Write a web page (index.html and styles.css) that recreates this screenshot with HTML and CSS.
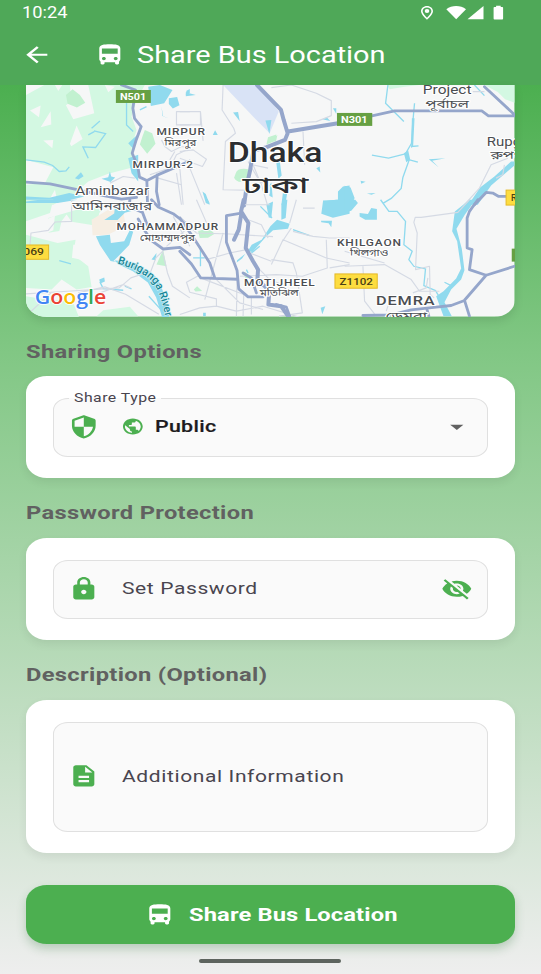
FILE: index.html
```html
<!DOCTYPE html>
<html lang="en">
<head>
<meta charset="utf-8">
<title>Share Bus Location</title>
<link rel="stylesheet" href="styles.css">
</head>
<body>
<svg width="0" height="0" class="defs" aria-hidden="true">
  <symbol id="bus" viewBox="0 0 24 24" preserveAspectRatio="none"><path d="M4 16c0 .88.39 1.67 1 2.22V20c0 .55.45 1 1 1h1c.55 0 1-.45 1-1v-1h8v1c0 .55.45 1 1 1h1c.55 0 1-.45 1-1v-1.78c.61-.55 1-1.34 1-2.22V6c0-3.5-3.58-4-8-4s-8 .5-8 4v10zm3.500 1c-.83 0-1.500-.67-1.500-1.500S6.670 14 7.500 14s1.500.67 1.500 1.500S8.330 17 7.500 17zm9 0c-.83 0-1.500-.67-1.500-1.500s.67-1.500 1.500-1.500 1.500.67 1.500 1.500-.67 1.500-1.500 1.500zm1.500-6H6V6h12v5z"/></symbol>
</svg>
<div class="screen">
  <header class="top">
    <div class="status">
      <span class="tx time">10:24</span>
      <svg class="status-icons" viewBox="0 0 86 16" width="86" height="16">
        <path fill-rule="evenodd" d="M7 1C3.600 1 1 3.400 1 6.300C1 9.800 7 14.700 7 14.700S13 9.800 13 6.300C13 3.400 10.400 1 7 1zM7 2.500c2.600 0 4.400 1.700 4.400 3.800c0 2-2.600 4.800-4.400 6.500c-1.800-1.700-4.400-4.500-4.400-6.500C2.600 4.200 4.400 2.500 7 2.500z"/>
        <ellipse cx="7" cy="6" rx="2.300" ry="1.900"/>
        <path d="M26.300 4.200C31.800 0 40.500 0 46 4.200L36.200 14.200z"/>
        <path d="M63.500 1V14.200H47.500z"/>
        <path d="M74.500 2h1.600V.8h4.600V2h1.600q.8 0 .8.800v10.700q0 .9-.8.900h-7.800q-.9 0-.9-.9V2.800q0-.8.900-.8z"/>
      </svg>
    </div>
    <div class="toolbar">
      <svg class="icon" viewBox="0 0 24 24" preserveAspectRatio="none"><path d="M20 11H7.830l5.590-5.590L12 4l-8 8 8 8 1.410-1.410L7.830 13H20v-2z"/></svg>
      <svg class="icon bar-bus"><use href="#bus"/></svg>
      <h1 class="tx title">Share Bus Location</h1>
    </div>
  </header>

  <main class="content">
    <svg class="map" viewBox="78 255 1467 696" preserveAspectRatio="none">
      <rect x="78" y="255" width="1467" height="696" fill="#f6f7f7"/>

      <!-- north-west -->
      <g transform="translate(60 240)">
        <path class="park" d="M18 15H375L350 60 335 110 350 150 335 200 340 262 265 282 205 305 160 345 100 375H18V315L75 310 100 262 18 240z"/>
        <path class="land" d="M18 15h55L18 45zM150 15h55l18 85-63 18-22-42 15-12zM30 92l32-15-5 35zM62 142l30-48 2 40zM70 182l30-2-3 25zM150 192l20-55 18 40-34 22zM105 15l22 0-12 18zM255 15l30 5-20 17zM200 335l30-25 20 20zM85 365l20-35 8 40z"/>
        <path class="green" d="M138 45l20-17 22 17 16 23-25 15-28-12zM375 150l22 10 10 32-25 30-22-28 8-25z"/>
        <path class="water" d="M385 20l35-5 38 15-25 40-40 8zM447 55l25-4 7 25-20 10-12-14zM425 80l5 30 18 6-20-8zM500 32l10-5v12l-12 5zM165 295l18-18 8 12-15 10zM245 297l20-5 5-17 4 15 12 3-14 14zM325 190l30-28-15 45zM325 235l30-10v80l-20-25zM18 350l70 4 60-14 45 10-55 14-40 6-45-4-35 10z"/>
        <path class="stream" d="M18 240l55 7 25 10 20 18 20-2 10-12M215 145l25-22M222 153l35 8-30 42-38-2 16 34M205 165l18-10M265 345l30-20M320 60v75l20 20M360 90l20-10"/>
        <path class="minor" d="M510 95h-40v40h40M425 180l10 20 20 15 30-15 25 5M450 240l15-25M390 285l60-20 20-40 40-20M415 295l70 20M270 310l40-20 35 5M470 280l15 95"/>
        <path class="road" d="M18 307l72 5 75 16 90 20 50 10 45-5M305 15l42 15-8 55 5 30 20 25-15 40-12 40 17 40 5 32 22 10 2 73M382 302l30-16 98-42M412 285l-2 50 8 40"/>
      </g>

      <!-- north -->
      <g transform="translate(540 240)">
        <path class="air" d="M130 15H235L275 65l22 30-27 65-45-45z"/>
        <path class="green" d="M265 172l25-8-5 20-25 10zM168 280q5-17 38-12l-5 36q-30 8-38-10zM268 185l25-20-4 20z"/>
        <path class="water" d="M257 122l18-2-6 42zM160 98l15-2 5 28zM99 165l7-14 8 14zM290 250l10-8 6 45-10 10zM312 322l15-10-10 63h-12zM270 315l5-7 4 45-10-5zM68 335l10 8 12 32-12-5zM430 375v-13l45-2 0-25 15-15 20-3v58zM427 118l15-5 10 10zM410 265l10-5 2 18zM18 37l30 8-30 4zM460 85l10 0v17z"/>
        <path class="minor" d="M130 15l-3 75 35 55 5 15-30 25-7 145 90 2M275 23l60-8 75 25 45 22v45l-45 18-75 5M370 155l5 100M0 95h62v40H0M62 95l8 88M0 215l40-5 40 28-12 22-68-25M30 265l45 110M0 265l10 110M205 245l35 60 35 15M265 265l-45-10 25 60 18 60"/>
        <path class="road wide" d="M232 15l72 75 8 30 12 40-8 20-55 22-40 10-10 60-10 45-8 60M325 155l150-25"/>
      </g>

      <!-- north-east -->
      <g transform="translate(1035 240)">
        <path class="park" d="M128 15H225l-45 5-45 8zM420 15h90v53l-28-10-22-22z"/>
        <path class="water" d="M500 245l10 0v12l-70 60-40 58h-28l35-52 43-33zM178 220l13-8 6 27-12 8zM0 318l18 5 12 32-8 20H0zM48 303l15 3-13 6zM67 341l26-1-12 5zM202 115h8l-4 82-6 8zM253 238l50-3-40 8 20 20z"/>
        <path class="stream" d="M130 15l-7 55 30 30 25 25M210 70l-5 55-4 65-16 28 8 25-18 50-5 33-30 30-25 15M82 226l50 9 50-13M195 240l25 7M200 200l22-2M390 15l30 32"/>
        <path class="minor" d="M385 35h35M490 235l-50 20-35 70-45 50M480 255l-5 30-20 10"/>
        <path class="road" d="M82 108l68-15h262l20 15h78M420 20l88 82M390 375l35-37 20 2 18 10h25"/>
      </g>

      <!-- south-west -->
      <g transform="translate(60 600)">
        <path class="park" d="M18 0H100l-10 40-72 25zM85 55L240 10l20 5-22 25-8 38-75-12-15-22-15 20-7 30-32 5zM18 105l95 25 54-10-7 45 45 35 10 62-45 8-45-30-30 30-77-5zM18 290l60 10 80 5 20 50H18zM250 332l80-10 25 28H230z"/>
        <path class="land" d="M75 62l30-15-5 45-25 10zM160 135l30 0-10 45-24-6z"/>
        <path d="M215 60l50-30 45 5 8 45-55 25-45 2z" fill="#f6eee3"/>
        <path class="green" d="M410 195l20-45 10 50z"/>
        <path class="water" d="M285 20l45-5 20 15-35 9-22 22-40 0 30-20zM228 110l42-5 3 25 40-5 17-34 10 5-12 40-32 33-15 15 15 5-24-5-20-30-12-18zM285 182l45 7 70 35 15 15 22 55 12 60h-22l-18-60-25-45-45-34-45-22zM395 180l15-20-2 22zM238 240l15-6 2 12-14 6zM18 5l40-5 115 0-60 10-95 0z"/>
        <path class="stream" d="M118 183l35 10M240 247l10 20 60 5M387 290l43 48M315 260l20 8"/>
        <path class="minor" d="M28 160l5-60 52-8 20-25 50-2V0M18 283l125-8 155-10 35-30 60-20 15-40 20-20 15 65 15 40 52 35M175 280l80-18 62 22 100 60M18 350l75-70M240 280l70-25 20 10M460 50l50 90M440 140l70-60"/>
        <path class="road" d="M395 0l20 22 45 20 50 38M330 0l-2 20 40 18 15 40M355 58l20 35 20 30 35 25 50-5 30 22"/>
      </g>

      <!-- south -->
      <g transform="translate(540 600)">
        <path class="green" d="M55 95l30-10 20 17-20 12-25 1zM42 270l10-10 15 14-20 2zM188 220l8-3 14 13-10 10z"/>
        <path class="water" d="M272 80l20-20 38 12-5 15-45 5-22 20-40 45-14-2 12-20 30-15zM305 60V15l5-15h13l-5 55zM260 15l20-10-5 50-8-2zM430 5l40-5 40 0v42l-50 12-35-12zM424 63h33l-2 20-8-12-22-3zM75 0l8-2 8 15zM423 325l14-5-9 24zM172 182l25-20-10 15-16 12zM70 340l8 0v10h-8z"/>
        <path class="stream" d="M242 20l35 35M240 140l-25 20M62 200V140M40 175h35M205 220l-5-10M340 90l50 18"/>
        <path class="minor" d="M0 50l50 50 100 3 130 8M50 0l35 80M340 95l60 15 50 5 60 0M350 0l-20 70M275 195l35-75 130 55 70 15M440 120l3 85-75 25-78-5-110 5M275 180l65 10 10 30 18 120-70 10M335 85l-30 45M0 345l60-20 50-5 0-22-80-20-10-30 40-22M110 320l60 15 80-15 115 35M130 100l-55 200M172 225l-2 125M62 235l130 50-2 65M205 60l40 15 20 40M195 15l75 0M240 210l30 30 50 20M210 160l65 25M80 180l70-20 50-10M370 25h35M215 295v50M110 240l70 70 70 20M510 195l-60 10"/>
        <path class="road wide" d="M192 0l-8 35 22 35-8 75 22 40 15 25-2 30 28 25 7 22-2 28 38 5 20 28M185 40l-8 50-14 30"/>
        <path class="road" d="M185 40l-45 8v80l32 85 5 55 28 24h45M190 220l25 15 15 45M290 315l30 8 10 27M0 155l35 38 28 42 110 4M0 55l45 65 45 70 15 45"/>
      </g>

      <!-- south-east -->
      <g transform="translate(1035 600)">
        <path class="water" d="M0 0h32l8 10-20 23-20 5zM45 40l25 3 10-18 17 3v32l-35 0-17-10zM375 0h18l-32 45-25 42 16 60 8 65-10 28-30 30-20 38 22 42h-25l-22-60 22-15 38-38 15-30-12-82-15-30 8-60z"/>
        <path class="stream" d="M108 0l25 35 25 0 25 30-5 70 25 20-10 25 15 20 35 8-5 50 35 15 15 25M300 248l20 10"/>
        <path class="minor" d="M375 0l-35 38-110 15-18 0-4 15 10 32-5 110 42-10 2 85 12 10M0 200l120-5 80 45 25 35 60 0M55 200l5 105 35 45M0 155l120 35M135 305l-10 30M250 235l-5 30-40 15"/>
        <path class="road" d="M400 0l-25 35-7 20v90l15 5-8 60 50 17 85-27M425 227l-65 75 15 48M55 348l85-2 60-15 75-8 45-5 40-15M248 332l5 18"/>
      </g>

      <!-- road shields -->
      <rect x="348" y="270" width="105" height="39" fill="#66a043"/>
      <rect x="1012" y="339" width="106" height="39" fill="#66a043"/>
      <rect x="1537" y="747" width="10" height="39" fill="#66a043"/>
      <g fill="#fddd40" stroke="#e5b926" stroke-width="3">
        <rect x="60" y="736" width="86" height="43"/>
        <rect x="1006" y="823" width="127" height="43"/>
        <rect x="1520" y="571" width="60" height="45"/>
      </g>
      <g class="shield">
        <text x="360" y="300" textLength="79" lengthAdjust="spacingAndGlyphs">N501</text>
        <text x="1024" y="369" textLength="80" lengthAdjust="spacingAndGlyphs">N301</text>
        <g class="dark">
          <text x="70" y="767" textLength="62" lengthAdjust="spacingAndGlyphs">069</text>
          <text x="1020" y="855" textLength="100" lengthAdjust="spacingAndGlyphs">Z1102</text>
          <text x="1535" y="605">R</text>
        </g>
      </g>

      <g class="label">
        <text x="470" y="405" textLength="148" lengthAdjust="spacingAndGlyphs" class="area">MIRPUR</text>
        <text x="494" y="438" textLength="96" lengthAdjust="spacingAndGlyphs" class="bn">মিরপুর</text>
        <text x="398" y="504" textLength="184" lengthAdjust="spacingAndGlyphs" class="area">MIRPUR-2</text>
        <text x="226" y="586" textLength="222" lengthAdjust="spacingAndGlyphs" class="town">Aminbazar</text>
        <text x="217" y="630" textLength="240" lengthAdjust="spacingAndGlyphs" class="bn big">আমিনবাজার</text>
        <text x="350" y="691" textLength="308" lengthAdjust="spacingAndGlyphs" class="area">MOHAMMADPUR</text>
        <text x="420" y="724" textLength="166" lengthAdjust="spacingAndGlyphs" class="bn">মোহাম্মদপুর</text>
        <text x="684" y="488" textLength="284" lengthAdjust="spacingAndGlyphs" class="city">Dhaka</text>
        <text x="728" y="580" textLength="198" lengthAdjust="spacingAndGlyphs" class="city bn-city">ঢাকা</text>
        <text x="1270" y="281" textLength="146" lengthAdjust="spacingAndGlyphs" class="town">Project</text>
        <text x="1278" y="324" textLength="130" lengthAdjust="spacingAndGlyphs" class="bn big">পূর্বাচল</text>
        <text x="1462" y="437" textLength="103" lengthAdjust="spacingAndGlyphs" class="town">Rupg</text>
        <text x="1473" y="478" textLength="100" lengthAdjust="spacingAndGlyphs" class="bn big">রুপগ</text>
        <text x="1012" y="738" textLength="195" lengthAdjust="spacingAndGlyphs" class="area">KHILGAON</text>
        <text x="1051" y="770" textLength="115" lengthAdjust="spacingAndGlyphs" class="bn">খিলগাও</text>
        <text x="733" y="858" textLength="215" lengthAdjust="spacingAndGlyphs" class="area">MOTIJHEEL</text>
        <text x="780" y="890" textLength="117" lengthAdjust="spacingAndGlyphs" class="bn">মতিঝিল</text>
        <text x="1129" y="917" textLength="179" lengthAdjust="spacingAndGlyphs" class="area demra">DEMRA</text>
        <text x="1158" y="962" textLength="125" lengthAdjust="spacingAndGlyphs" class="bn big">ডেমরা</text>
      </g>
      <path id="river" d="M352 792C400 806 438 824 460 850C482 880 488 915 496 950" fill="none"/>
      <text class="river"><textPath href="#river">Buriganga River</textPath></text>

      <g class="google">
        <text x="104" y="913" textLength="215" lengthAdjust="spacingAndGlyphs"><tspan fill="#4285f4">G</tspan><tspan fill="#ea4335">o</tspan><tspan fill="#fbbc04">o</tspan><tspan fill="#4285f4">g</tspan><tspan fill="#34a853">l</tspan><tspan fill="#ea4335">e</tspan></text>
      </g>
    </svg>

    <h2 class="tx heading">Sharing Options</h2>
    <section class="card">
      <div class="field">
        <span class="float"><span class="tx">Share Type</span></span>
        <svg class="icon" viewBox="0 0 24 24" preserveAspectRatio="none"><path d="M11.190 1.360l-7 3.110C3.470 4.790 3 5.510 3 6.300V11c0 5.550 3.840 10.740 9 12 5.160-1.260 9-6.450 9-12V6.300c0-.79-.47-1.510-1.190-1.830l-7-3.110c-.51-.23-1.110-.23-1.620 0zM12 11.990h7c-.53 4.120-3.280 7.790-7 8.940V12H5V6.300l7-3.110v8.800z"/></svg>
        <svg class="icon globe" viewBox="0 0 24 24" preserveAspectRatio="none"><path d="M12 2C6.480 2 2 6.480 2 12s4.480 10 10 10 10-4.480 10-10S17.520 2 12 2zm-1 17.930c-3.950-.49-7-3.850-7-7.930 0-.62.080-1.210.210-1.790L9 15v1c0 1.100.9 2 2 2v1.930zm6.900-2.540c-.26-.81-1-1.390-1.900-1.390h-1v-3c0-.55-.45-1-1-1H8v-2h2c.55 0 1-.45 1-1V7h2c1.100 0 2-.9 2-2v-.41c2.930 1.190 5 4.060 5 7.410 0 2.080-.8 3.970-2.100 5.390z"/></svg>
        <span class="tx value">Public</span>
        <svg class="icon trail caret" viewBox="0 0 24 24" preserveAspectRatio="none"><path d="M7 10l5 5 5-5z"/></svg>
      </div>
    </section>

    <h2 class="tx heading">Password Protection</h2>
    <section class="card">
      <div class="field">
        <svg class="icon" viewBox="0 0 24 24" preserveAspectRatio="none"><path d="M18 8h-1V6c0-2.760-2.240-5-5-5S7 3.240 7 6v2H6c-1.100 0-2 .9-2 2v10c0 1.100.9 2 2 2h12c1.100 0 2-.9 2-2V10c0-1.100-.9-2-2-2zm-6 9c-1.100 0-2-.9-2-2s.9-2 2-2 2 .9 2 2-.9 2-2 2zM9 8V6c0-1.660 1.340-3 3-3s3 1.340 3 3v2H9z"/></svg>
        <span class="tx hint">Set Password</span>
        <svg class="icon trail" viewBox="0 0 24 24" preserveAspectRatio="none"><path d="M12 7c2.760 0 5 2.240 5 5 0 .65-.13 1.260-.36 1.830l2.920 2.920c1.510-1.260 2.700-2.890 3.430-4.750-1.730-4.390-6-7.500-11-7.500-1.400 0-2.740.25-3.980.7l2.160 2.160C10.740 7.130 11.350 7 12 7zM2 4.270l2.280 2.280.46.46C3.080 8.300 1.780 10.020 1 12c1.730 4.390 6 7.500 11 7.500 1.550 0 3.030-.3 4.380-.84l.42.42L19.730 22 21 20.730 3.270 3 2 4.270zM7.530 9.800l1.550 1.550c-.05.21-.08.43-.08.65 0 1.660 1.340 3 3 3 .22 0 .44-.03.65-.08l1.550 1.550c-.67.33-1.410.53-2.200.53-2.760 0-5-2.240-5-5 0-.79.2-1.530.53-2.200zm4.310-.78l3.150 3.150.02-.16c0-1.660-1.340-3-3-3l-.17.01z"/></svg>
      </div>
    </section>

    <h2 class="tx heading">Description (Optional)</h2>
    <section class="card">
      <div class="field tall">
        <svg class="icon" viewBox="0 0 24 24" preserveAspectRatio="none"><path d="M14 2H6c-1.100 0-1.990.9-1.990 2L4 20c0 1.100.89 2 1.990 2H18c1.100 0 2-.9 2-2V8l-6-6zm2 16H8v-2h8v2zm0-4H8v-2h8v2zm-3-5V3.500L18.500 9H13z"/></svg>
        <span class="tx hint">Additional Information</span>
      </div>
    </section>

    <button class="submit">
      <svg class="icon"><use href="#bus"/></svg>
      <span class="tx">Share Bus Location</span>
    </button>
    <div class="home"></div>
  </main>
</div>
</body>
</html>
```
FILE: styles.css
```css
* { box-sizing: border-box; }
html, body { margin: 0; height: 100%; }
body { font-family: Roboto, "Noto Sans", sans-serif; overflow: hidden; }
.defs { position: absolute; }

.screen {
  height: 974px;
  display: flex;
  flex-direction: column;
  overflow: hidden;
}

/* Text is drawn 1.235 times wider than it is tall. */
.tx {
  display: block;
  white-space: nowrap;
  transform: scaleX(1.235);
  transform-origin: left center;
}

.icon {
  display: block;
  flex: none;
  width: 31.6px;
  height: 25.6px;
  fill: #4caf50;
}

.top {
  flex: none;
  height: 85px;
  background: #4fa858;
  color: #fff;
}
.top .icon, .status-icons { fill: #fff; }
.status {
  height: 26px;
  display: flex;
  justify-content: space-between;
  padding: 0 35px 0 21.5px;
}
.status-icons { margin-top: 5px; }
.time { font-size: 16px; line-height: 26px; transform: scaleX(1.14); }
.toolbar {
  height: 58px;
  display: flex;
  align-items: center;
  padding: 0 0 0 21px;
}
.bar-bus { margin-left: 41.5px; }
.title {
  margin: 0 0 0 11.500px;
  font-size: 23.4px;
  font-weight: 400;
  line-height: 30px;
}

.content {
  flex: 1;
  display: flex;
  flex-direction: column;
  padding: 0 26.300px;
  background: linear-gradient(#4caf50 0%, #81c784 30%, #eee 100%);
}
.map {
  flex: none;
  display: block;
  width: 100%;
  height: 231.500px;
  border-radius: 0 0 21px 21px / 0 0 17px 17px;
  box-shadow: 0 4px 10px rgba(0, 0, 0, .1);
}

.heading {
  margin: 0;
  height: 59.800px;
  padding-top: 21px;
  font-size: 19.200px;
  font-weight: 700;
  line-height: 27px;
  letter-spacing: .27px;
  color: #616161;
}
.card {
  flex: none;
  padding: 21.300px 26.300px;
  background: #fff;
  border-radius: 21px / 17px;
  box-shadow: 0 4px 10px rgba(0, 0, 0, .07);
}
.field {
  position: relative;
  display: flex;
  align-items: center;
  height: 59.600px;
  padding: 0 15px 2px 14px;
  background: #fafafa;
  border: 1px solid #e0e0e0;
  border-radius: 15px / 12px;
}
.field.tall { height: 110.400px; }
.float {
  position: absolute;
  left: 15px;
  top: -9px;
  width: 92px;
  height: 16px;
  padding-left: 5px;
  font-size: 12.800px;
  line-height: 16px;
  letter-spacing: .4px;
  color: #49454f;
  background: linear-gradient(#fff 50%, #fafafa 50%);
}
.globe { width: 23.700px; height: 19.200px; margin-left: 22px; }
.value {
  margin-left: 10.500px;
  font-size: 17.300px;
  font-weight: 500;
  letter-spacing: .25px;
  color: #1d1b20;
  -webkit-text-stroke: .2px #1d1b20;
}
.hint {
  margin-left: 22.500px;
  font-size: 17px;
  letter-spacing: .5px;
  color: #49454f;
}
.trail { margin-left: auto; }
.caret { fill: #616161; }

.submit {
  flex: none;
  display: flex;
  align-items: center;
  width: 100%;
  height: 58.500px;
  margin: 32px 0 0;
  padding: 0 0 0 118px;
  border: 0;
  border-radius: 21px / 17px;
  background: #4caf50;
  box-shadow: 0 5px 10px rgba(40, 110, 50, .25);
  color: #fff;
  font: 700 19.200px Roboto, sans-serif;
}
.submit .icon { fill: #fff; }
.submit .tx { margin-left: 13px; letter-spacing: .1px; }
.home {
  flex: none;
  width: 142px;
  height: 4.500px;
  margin: 15px 0 0 173px;
  border-radius: 3px;
  background: #5d645e;
}

/* Map */
.park { fill: #d3f8e2; }
.land { fill: #f6f7f7; }
.green { fill: #c2f1d0; }
.air { fill: #d9e3f6; }
.water { fill: #90daee; }
.stream { fill: none; stroke: #90daee; stroke-width: 4; }
.minor { fill: none; stroke: #d5dae4; stroke-width: 3.500; stroke-linejoin: round; }
.road { fill: none; stroke: #95a6cb; stroke-width: 8.500; stroke-linejoin: round; stroke-linecap: round; }
.road.wide { stroke-width: 12; }
.label text {
  fill: #4a4d51;
  stroke: #fff;
  stroke-width: 6;
  paint-order: stroke;
  stroke-linejoin: round;
}
.label .area { font-size: 28px; font-weight: 500; letter-spacing: 2px; }
.label .demra { font-size: 37px; }
.label .town { font-size: 37px; }
.label .bn { font-size: 26px; font-family: "Noto Sans Bengali", "Noto Sans", sans-serif; }
.label .bn.big { font-size: 33px; }
.label .city { font-size: 83px; font-weight: 500; fill: #2c2e31; }
.label .bn-city { font-size: 68px; font-family: "Noto Sans Bengali", "Noto Sans", sans-serif; }
.shield { font-size: 27px; font-weight: 700; fill: #fff; }
.shield .dark { fill: #4a4015; font-weight: 500; }
.river { font-size: 33px; font-weight: 500; fill: #188797; stroke: #d9f3f8; stroke-width: 4; paint-order: stroke; }
.google { font-family: "Open Sans", sans-serif; font-size: 58px; font-weight: 600; stroke: #fff; stroke-width: 5; paint-order: stroke; }
```
